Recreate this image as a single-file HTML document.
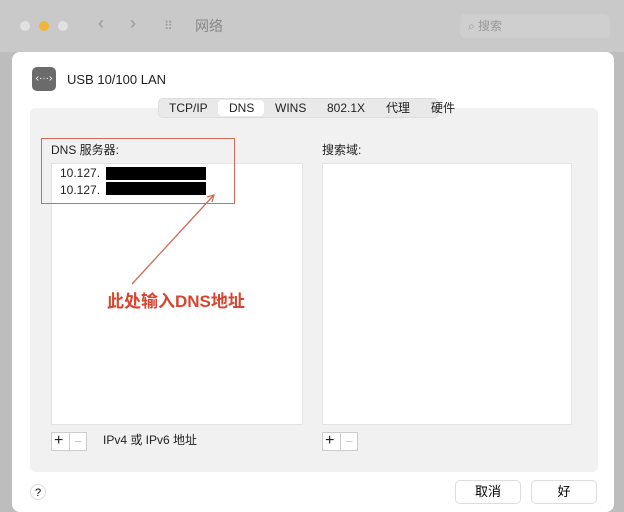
<!DOCTYPE html><html><head><style>
body{margin:0;width:624px;height:500px;overflow:hidden;background:#bdbdbd;font-family:"Liberation Sans","Noto Sans CJK SC",sans-serif;position:relative}
div{position:absolute;box-sizing:border-box}
.t{font-size:12px;color:#222;line-height:14px}
</style></head><body>
<div style="left:0;top:0;width:624px;height:52px;background:#c9c9c9"></div>
<div style="left:20px;top:21px;width:10px;height:10px;border-radius:50%;background:#e0e0e0"></div>
<div style="left:39px;top:21px;width:10px;height:10px;border-radius:50%;background:#f0b53a"></div>
<div style="left:58px;top:21px;width:10px;height:10px;border-radius:50%;background:#e0e0e0"></div>
<div class="t" style="left:98px;top:16px;font-size:18px;color:#999">‹</div>
<div class="t" style="left:130px;top:16px;font-size:18px;color:#999">›</div>
<div class="t" style="left:164px;top:19px;color:#999;font-size:12px">⠿</div>
<div class="t" style="left:195px;top:18px;font-size:14px;line-height:16px;color:#888">网络</div>
<div style="left:460px;top:14px;width:150px;height:24px;border-radius:6px;background:#cfcfcf"></div>
<div class="t" style="left:468px;top:19px;color:#999">⌕ 搜索</div>
<div style="left:12px;top:52px;width:602px;height:460px;background:#fff;border-radius:8px"></div>
<div style="left:32px;top:67px;width:24px;height:24px;border-radius:5px;background:#6b6b6b;color:#fff;font-size:10px;text-align:center;line-height:24px">‹···›</div>
<div class="t" style="left:67px;top:73px;font-size:13px">USB 10/100 LAN</div>
<div style="left:30px;top:108px;width:568px;height:364px;background:#f1f1f1;border-radius:6px"></div>
<div style="left:158px;top:98px;width:281px;height:20px;background:#e9e9e9;border-radius:5px;border:1px solid #ddd"></div>
<div style="left:218px;top:100px;width:46px;height:16px;background:#fff;border-radius:4px"></div>
<div class="t" style="left:169px;top:101px">TCP/IP</div>
<div class="t" style="left:229px;top:101px">DNS</div>
<div class="t" style="left:275px;top:101px">WINS</div>
<div class="t" style="left:327px;top:101px">802.1X</div>
<div class="t" style="left:386px;top:101px">代理</div>
<div class="t" style="left:431px;top:101px">硬件</div>
<div style="left:51px;top:163px;width:252px;height:262px;background:#fff;border:1px solid #e4e4e4"></div>
<div style="left:322px;top:163px;width:250px;height:262px;background:#fff;border:1px solid #e4e4e4"></div>
<div class="t" style="left:51px;top:143px">DNS 服务器:</div>
<div class="t" style="left:322px;top:143px">搜索域:</div>
<div class="t" style="left:60px;top:166px">10.127.</div>
<div class="t" style="left:60px;top:183px">10.127.</div>
<div style="left:106px;top:167px;width:100px;height:13px;background:#000"></div>
<div style="left:106px;top:182px;width:100px;height:13px;background:#000"></div>
<div style="left:41px;top:138px;width:194px;height:66px;border:1.5px solid #d46a5a"></div>
<svg style="position:absolute;left:0;top:0" width="624" height="500"><line x1="132" y1="284" x2="213" y2="196" stroke="#d46a5a" stroke-width="1.3"/><path d="M207 197 L214 195 L212 202" fill="none" stroke="#d46a5a" stroke-width="1.3"/></svg>
<div style="left:107px;top:292px;font-size:17px;line-height:20px;font-weight:bold;color:#d8452f">此处输入DNS地址</div>
<div style="left:51px;top:432px;width:36px;height:19px;border:1px solid #ccc;background:#fff"></div>
<div style="left:69px;top:432px;width:1px;height:19px;background:#ccc"></div>
<div class="t" style="left:54px;top:434px;font-size:16px">+</div>
<div class="t" style="left:74px;top:434px;font-size:14px;color:#ccc">−</div>
<div class="t" style="left:103px;top:433px">IPv4 或 IPv6 地址</div>
<div style="left:322px;top:432px;width:36px;height:19px;border:1px solid #ccc;background:#fff"></div>
<div style="left:340px;top:432px;width:1px;height:19px;background:#ccc"></div>
<div class="t" style="left:325px;top:434px;font-size:16px">+</div>
<div class="t" style="left:345px;top:434px;font-size:14px;color:#ccc">−</div>
<div style="left:30px;top:484px;width:16px;height:16px;border-radius:50%;border:1px solid #ddd;font-size:11px;text-align:center;line-height:16px">?</div>
<div style="left:455px;top:480px;width:66px;height:24px;border:1px solid #ddd;border-radius:5px;background:#fff;font-size:13px;text-align:center;line-height:22px">取消</div>
<div style="left:531px;top:480px;width:66px;height:24px;border:1px solid #ddd;border-radius:5px;background:#fff;font-size:13px;text-align:center;line-height:22px">好</div>
</body></html>
